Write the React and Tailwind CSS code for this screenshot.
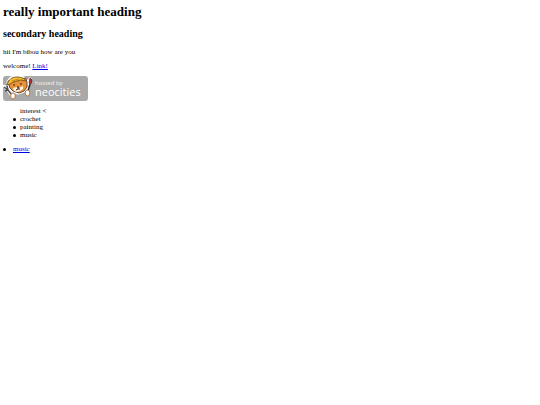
function NeocitiesBadge() {
  return (
    <svg viewBox="0 0 85 25" className="block h-[25px] w-[85px]" role="img" aria-label="Hosted by Neocities">
      <rect width="85" height="25" rx="3" fill="#a9a9a9" />
      <g stroke="#fff" fill="#fff" strokeWidth="3" strokeLinecap="round" strokeLinejoin="round">
        <path d="M1 10l4 4 4 6M27 3l-3 13" />
        <path d="M5 6l3-4 7-1 6 1 3 3v6l-3 4-6 2-6-2-3-4z" />
      </g>
      <path d="M6 9L5 5l4 0 8-2 6-1 1 5v4l-3 4-5 2-6-2-3-3z" fill="#e8923c" stroke="#5c3822" strokeWidth=".9" />
      <path d="M4 9c1-5 5-8 10-8 5 0 8 2 9 4l-5-1-8 2-3 2z" fill="#f3c02e" stroke="#72501f" strokeWidth=".9" />
      <path d="M9 5l7-2M8 7l11-3" stroke="#b87320" strokeWidth=".7" />
      <path d="M10 12l4-1 2 1 4-2v3l-3 2-3 1-3-1z" fill="#fff3df" />
      <path d="M11 8v2M18 7v2M14 11h2M15 11v2l-2 1m2-1l2 0" stroke="#39261f" strokeWidth="1" fill="none" />
      <path d="M1 11l4 3 4 5M2 15l3-1-1-4" fill="none" stroke="#4b4b4b" strokeWidth="1.5" />
      <path d="M27 8l-2 7" stroke="#342923" strokeWidth="1.6" />
      <path d="M26 7l1-5 2 2-1 4z" fill="#a72d35" stroke="#4d2524" strokeWidth=".7" />
      <ellipse cx="10" cy="20" rx="2.4" ry="3" fill="#fffaf0" stroke="#a8713f" strokeWidth=".9" />
      <ellipse cx="24.5" cy="17" rx="2.4" ry="3" fill="#fffaf0" stroke="#a8713f" strokeWidth=".9" />
      <text x="32" y="9" fill="#f3f3f3" fontFamily="Open Sans, sans-serif" fontSize="6">hosted by</text>
      <text x="32" y="20" fill="#fff" fontFamily="Open Sans, sans-serif" fontSize="11">neocities</text>
    </svg>
  );
}

function BulletItem({ children }) {
  return (
    <li className="flex items-center gap-1 before:size-[3px] before:rounded-full before:bg-black before:content-['']">
      {children}
    </li>
  );
}

export default function App() {
  return (
    <main className="bg-white px-[3px] pt-1 font-['Liberation_Serif',serif] text-[7px] leading-[8px] text-black">
      <h1 className="text-[13px] leading-4 font-bold">really important heading</h1>
      <h2 className="mt-2 text-[10px] leading-3 font-bold">secondary heading</h2>
      <p className="mt-2">hii I'm bibou how are you</p>
      <p className="mt-[6px]">
        welcome!{' '}
        <a href="#link" className="text-[#0000ee] underline">Link!</a>
      </p>
      <a href="#neocities" className="mt-[6px] block w-fit">
        <NeocitiesBadge />
      </a>
      <ul className="mt-[6px] pl-[10px]">
        <li className="pl-[7px]">interest &lt;</li>
        <BulletItem>crochet</BulletItem>
        <BulletItem>painting</BulletItem>
        <BulletItem>music</BulletItem>
      </ul>
      <ul className="mt-[6px]">
        <BulletItem>
          <a href="#music" className="ml-[3px] text-[#0000ee] underline">music</a>
        </BulletItem>
      </ul>
    </main>
  );
}
